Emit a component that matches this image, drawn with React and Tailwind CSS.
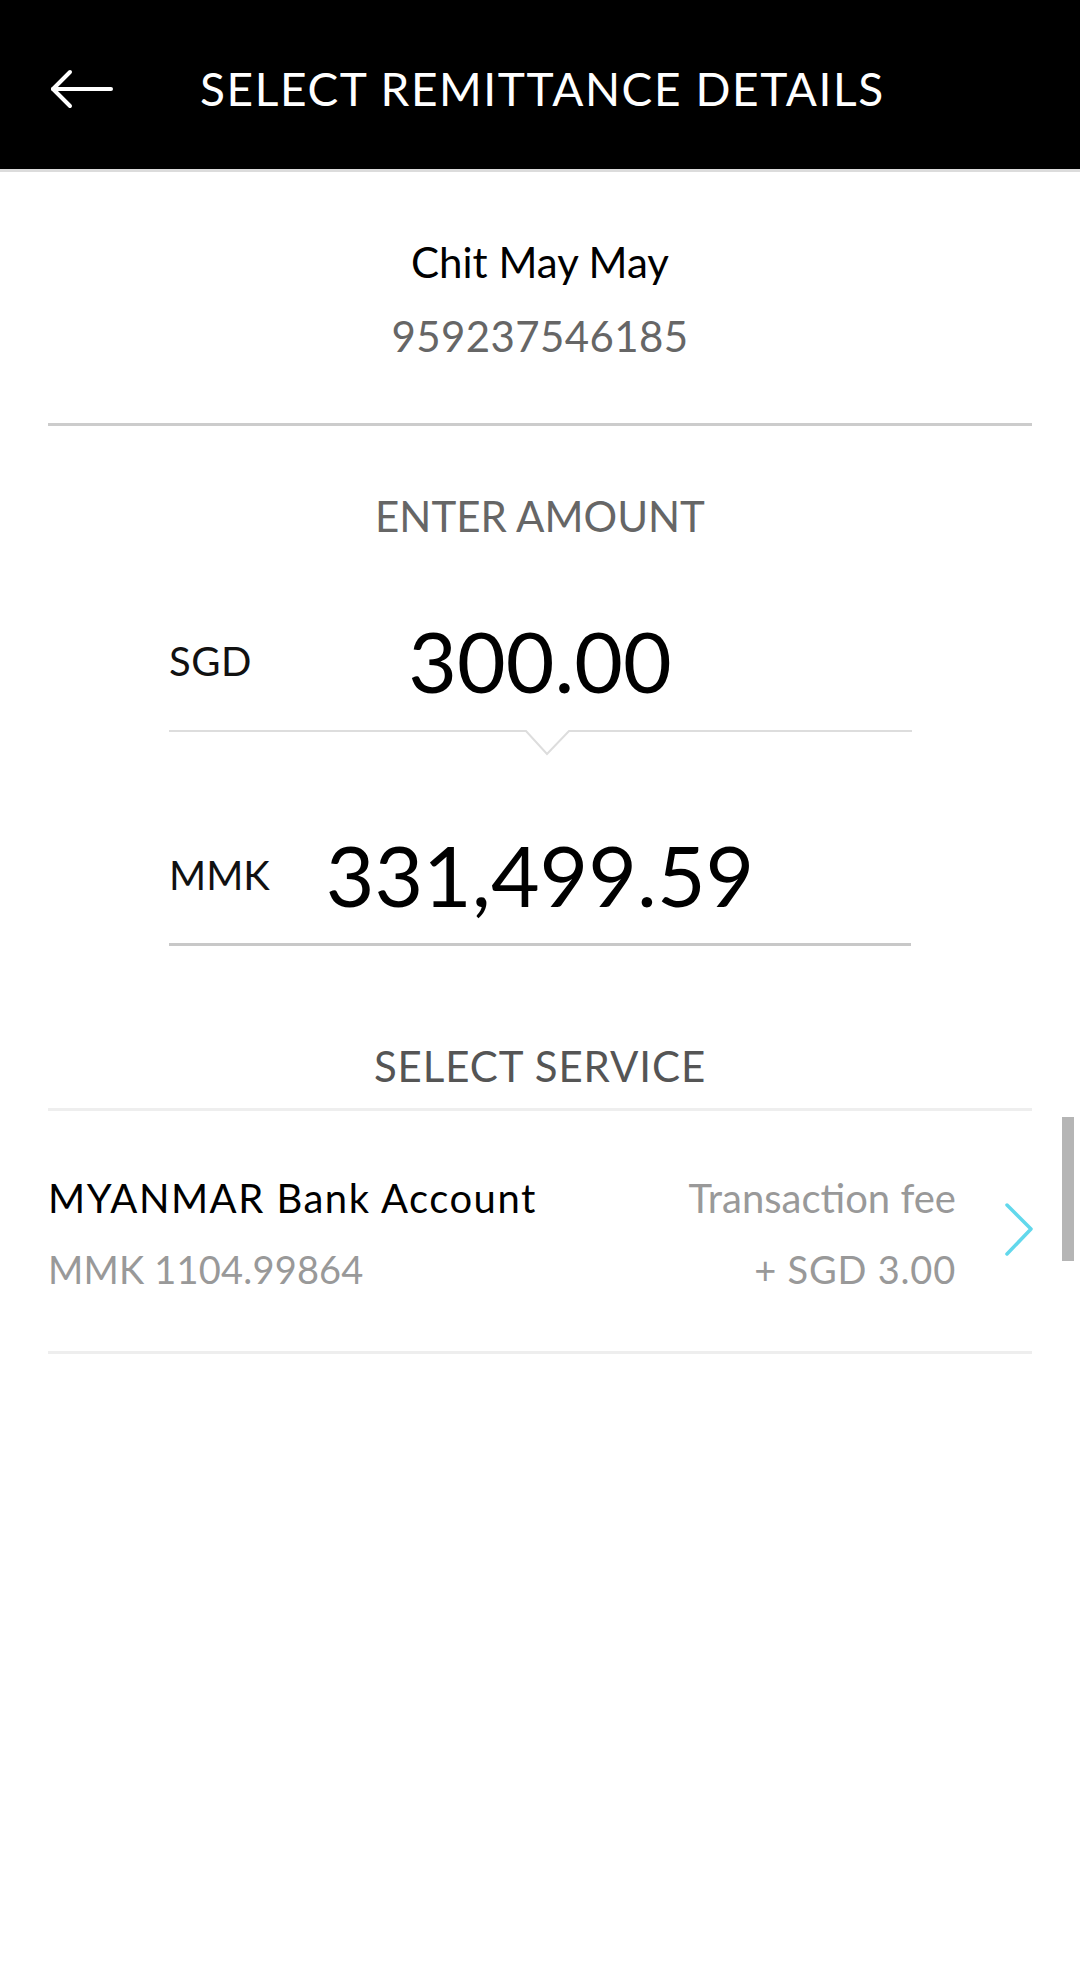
import React from "react";

function BackArrow() {
  return (
    <svg width="68" height="40" viewBox="0 0 68 40" fill="none">
      <path d="M5 20 H63" stroke="#ffffff" strokeWidth="4" strokeLinecap="round" />
      <path d="M22 3 L5 20 L22 37" stroke="#ffffff" strokeWidth="4" strokeLinecap="round" strokeLinejoin="round" />
    </svg>
  );
}

function NotchLine() {
  return (
    <svg width="743" height="27" viewBox="0 0 743 27" fill="none" className="block">
      <polyline points="0,2 357,2 378,25 400,2 743,2" stroke="#dddddd" strokeWidth="2" fill="none" />
    </svg>
  );
}

function Chevron() {
  return (
    <svg width="30" height="54" viewBox="0 0 30 54" fill="none">
      <path d="M3 2 L27 26 L3 51" stroke="#62d8ec" strokeWidth="3.5" strokeLinecap="round" strokeLinejoin="round" />
    </svg>
  );
}

export default function App() {
  return (
    <div
      className="relative min-h-[1966px] w-[1080px] bg-white"
      style={{ fontFamily: "Lato, 'Open Sans', sans-serif" }}
    >
      {/* Header */}
      <div className="flex h-[172px] items-center border-b-[3px] border-[#dcdcdc] bg-black pl-[48px] pt-[9px]">
        <BackArrow />
        <div className="ml-[84px] text-[46px] leading-none tracking-[1.6px] text-white">SELECT REMITTANCE DETAILS</div>
      </div>

      {/* Recipient */}
      <div className="flex flex-col items-center">
        <div className="mt-[69px] text-[42px] leading-none text-black">Chit May May</div>
        <div className="mt-[32px] text-[42px] leading-none tracking-[0.4px] text-[#666666]">959237546185</div>
      </div>
      <div className="mx-[48px] mt-[66px] h-[3px] bg-[#cccccc]" />

      {/* Enter amount */}
      <div className="mt-[69px] text-center text-[42px] leading-none text-[#666666]">ENTER AMOUNT</div>

      <div className="mx-[169px] mt-[82px] flex flex-col">
        <div className="grid items-center">
          <div className="col-start-1 row-start-1 justify-self-start text-[40px] leading-none tracking-[0.5px] text-[#111111]">SGD</div>
          <div className="col-start-1 row-start-1 justify-self-center text-[84px] leading-none text-black">300.00</div>
        </div>
        <div className="mt-[26px]">
          <NotchLine />
        </div>
        <div className="mt-[77px] grid items-center">
          <div className="col-start-1 row-start-1 justify-self-start text-[40px] leading-none text-[#111111]">MMK</div>
          <div className="col-start-1 row-start-1 justify-self-center text-[84px] leading-none text-black">331,499.59</div>
        </div>
        <div className="mt-[26px] h-[3px] bg-[#c8c8c8]" />
      </div>

      {/* Select service */}
      <div className="mt-[99px] text-center text-[42px] leading-none tracking-[0.9px] text-[#555555]">SELECT SERVICE</div>
      <div className="mx-[48px] mt-[21px] h-[3px] bg-[#eeeeee]" />

      <div className="mx-[48px] mt-[67px] flex items-center">
        <div className="flex flex-1 flex-col">
          <div className="text-[40px] leading-none tracking-[1.5px] text-black">MYANMAR Bank Account</div>
          <div className="mt-[32px] text-[38px] leading-none tracking-[0.2px] text-[#999999]">MMK 1104.99864</div>
        </div>
        <div className="flex flex-col items-end">
          <div className="text-[40px] leading-none text-[#999999]">Transaction fee</div>
          <div className="mt-[32px] text-[38px] leading-none tracking-[0.8px] text-[#999999]">+ SGD 3.00</div>
        </div>
        <div className="ml-[48px] mr-[-2px] -mt-[6px]">
          <Chevron />
        </div>
      </div>
      <div className="mx-[48px] mt-[63px] h-[3px] bg-[#eeeeee]" />

      {/* Scrollbar overlay */}
      <div className="absolute left-[1062px] top-[1117px] h-[144px] w-[12px] bg-[#b5b5b5]" />
    </div>
  );
}
